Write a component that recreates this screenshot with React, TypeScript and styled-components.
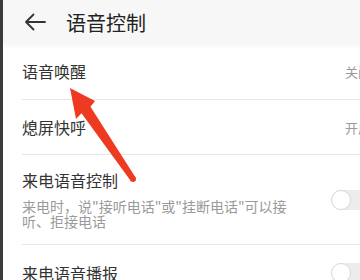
import React from "react";
import styled, { createGlobalStyle } from "styled-components";

const Global = createGlobalStyle`
  html, body { margin: 0; padding: 0; background: #fff; overflow: hidden; }
  body { font-family: "Noto Sans CJK SC", "Noto Sans", sans-serif; }
`;

const Page = styled.div`
  position: relative;
  width: 360px;
  height: 280px;
  overflow: hidden;
  background: #fff;
  border-left: 3px solid #3b3b3b;
  box-sizing: border-box;
`;

const Inner = styled.div`
  width: 382px;
`;

const Header = styled.div`
  height: 44px;
  background: #f7f7f7;
  display: flex;
  align-items: center;
  padding-left: 21px;
  box-shadow: 0 2px 4px rgba(0, 0, 0, 0.04);
  position: relative;
`;

const Title = styled.div`
  margin-left: 20px;
  font-size: 20px;
  color: #222;
  line-height: 1;
  margin-top: 1px;
`;

const List = styled.div`
  padding-left: 19px;
`;

const Row = styled.div<{ $h: number; $last?: boolean }>`
  height: ${(p) => p.$h}px;
  display: flex;
  align-items: center;
  padding-right: 14px;
  border-bottom: ${(p) => (p.$last ? "none" : "1px solid #e6e6e6")};
  box-sizing: border-box;
`;

const TextCol = styled.div`
  flex: 1;
  display: flex;
  flex-direction: column;
`;

const RowTitle = styled.div`
  font-size: 16px;
  color: #333;
  line-height: 20px;
`;

const Sub = styled.div`
  font-size: 14px;
  color: #9a9a9a;
  line-height: 15px;
  margin-top: 9px;
  width: 272px;
`;

const Value = styled.div`
  font-size: 13px;
  color: #999;
`;

const Switch = styled.div`
  width: 40px;
  height: 20px;
  border-radius: 10px;
  background: #ececec;
  position: relative;
  &::before {
    content: "";
    position: absolute;
    left: 0;
    top: 0;
    width: 18px;
    height: 18px;
    border-radius: 50%;
    background: #fff;
    border: 1px solid #d8d8d8;
  }
`;

const Overlay = styled.svg`
  position: absolute;
  left: -3px;
  top: 0;
  pointer-events: none;
`;

export default function App() {
  return (
    <>
      <Global />
      <Page>
        <Inner>
          <Header>
            <svg width="22" height="18" viewBox="0 0 22 18">
              <path d="M21 9H2M9.5 1.5L2 9l7.5 7.5" fill="none" stroke="#333" strokeWidth="1.8" strokeLinecap="round" strokeLinejoin="round" />
            </svg>
            <Title>语音控制</Title>
          </Header>
          <List>
            <Row $h={56}>
              <TextCol style={{ marginTop: -2 }}>
                <RowTitle>语音唤醒</RowTitle>
              </TextCol>
              <Value>关闭</Value>
            </Row>
            <Row $h={55}>
              <TextCol>
                <RowTitle>熄屏快呼</RowTitle>
              </TextCol>
              <Value>开启</Value>
            </Row>
            <Row $h={90}>
              <TextCol>
                <RowTitle>来电语音控制</RowTitle>
                <Sub>来电时，说"接听电话"或"挂断电话"可以接听、拒接电话</Sub>
              </TextCol>
              <Switch />
            </Row>
            <Row $h={56} $last>
              <TextCol>
                <RowTitle>来电语音播报</RowTitle>
              </TextCol>
              <Switch />
            </Row>
          </List>
        </Inner>
        <Overlay width="360" height="280" viewBox="0 0 360 280">
          <polygon points="70,88 76,119 81.5,113.2 130.6,180.7 135.4,177.3 90.5,106.8 95,101" fill="#ef3a22" />
          <circle cx="133" cy="179" r="3" fill="#ef3a22" />
        </Overlay>
      </Page>
    </>
  );
}
